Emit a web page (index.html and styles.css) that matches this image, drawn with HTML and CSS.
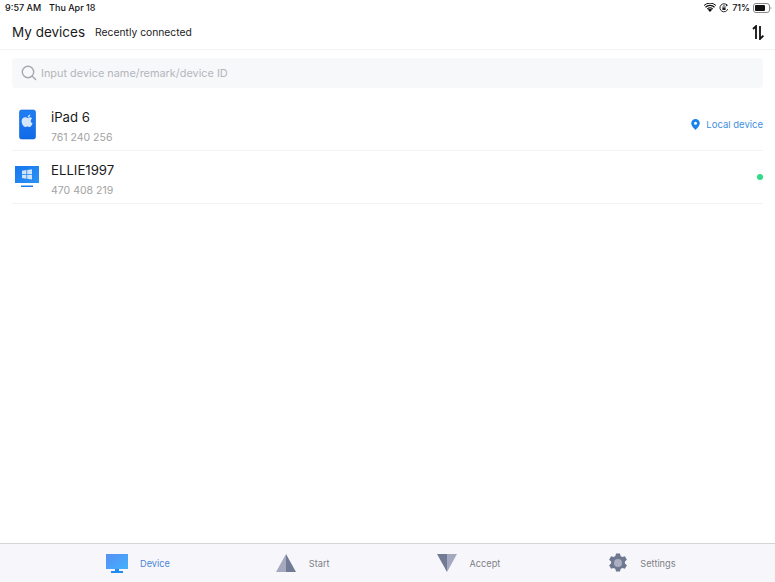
FILE: index.html
```html
<!DOCTYPE html>
<html lang="en">
<head>
<meta charset="utf-8">
<title>My devices</title>
<link rel="stylesheet" href="styles.css">
</head>
<body>
<div class="app">
  <div class="status">
    <div class="status-left"><span>9:57 AM</span><span>Thu Apr 18</span></div>
    <div class="status-right">
      <svg class="wifi" width="12" height="9" viewBox="0 0 12 9"><path d="M6 9 3.900 6.700a3 3 0 0 1 4.200 0Z" fill="#111"/><path d="M2.900 5.600a4.500 4.500 0 0 1 6.200 0L8.300 6.400a3.400 3.400 0 0 0-4.600 0Z" fill="#111"/><path d="M1 3.800a7.200 7.200 0 0 1 10 0l-.9.900a5.900 5.900 0 0 0-8.200 0Z" fill="#111"/><path d="M0 2.500a8.700 8.700 0 0 1 12 0" fill="none" stroke="#111" stroke-width="1"/></svg>
      <svg class="lock" width="10" height="10" viewBox="0 0 10 10"><path d="M8.700 6.200A4 4 0 1 1 8 2.200" fill="none" stroke="#222" stroke-width="1"/><path d="M7 .8 9 2.300 6.900 3.400Z" fill="#222"/><rect x="3.400" y="4.400" width="3.200" height="2.600" fill="#222"/><path d="M4 4.400V3.600a1 1 0 0 1 2 0v.8" fill="none" stroke="#222" stroke-width=".7"/></svg>
      <span>71%</span>
      <svg class="battery" width="19" height="10" viewBox="0 0 19 10"><rect x=".5" y=".5" width="16" height="9" rx="2.500" fill="none" stroke="#888"/><rect x="2" y="2" width="10" height="6" rx="1" fill="#111"/><path d="M17.600 3.400a2 2 0 0 1 0 3.200Z" fill="#888"/></svg>
    </div>
  </div>
  <header class="header">
    <div class="title-group">
      <h1 class="title">My devices</h1>
      <span class="subtitle">Recently connected</span>
    </div>
    <svg class="sort" width="14" height="15" viewBox="0 0 14 15"><path d="M2 4 5 1.200V14" fill="none" stroke="#111" stroke-width="1.800"/><path d="M9 1v13l3.400-3.400" fill="none" stroke="#111" stroke-width="1.800"/></svg>
  </header>
  <div class="search-wrap">
    <div class="search">
      <svg width="16" height="16" viewBox="0 0 16 16"><circle cx="7" cy="7" r="5.700" fill="none" stroke="#a5a8ac" stroke-width="1.400"/><path d="m11 11 3.600 3.600" stroke="#a5a8ac" stroke-width="1.400" stroke-linecap="round"/></svg>
      <span class="placeholder">Input device name/remark/device ID</span>
    </div>
  </div>
  <main class="list">
    <div class="row">
      <svg class="dev-icon" width="30" height="32" viewBox="0 0 30 32">
        <defs><linearGradient id="phone" x1="0" y1="0" x2="0" y2="1"><stop offset="0" stop-color="#1e7ff5"/><stop offset="1" stop-color="#0f6ae6"/></linearGradient></defs>
        <rect x="7.500" y="2" width="16" height="29" rx="2" fill="url(#phone)" stroke="#0d5fd0" stroke-width=".6"/>
        <g transform="translate(-3 -3.200) scale(1.250)">
          <path d="M15.200 10.500c.9-.7 2.400-.8 3.300.4-1.600 1-1.300 3.200.4 3.900-.5 1.400-1.400 3-2.500 3-.7 0-1-.4-1.700-.4s-1 .4-1.700.4c-1.400 0-2.900-2.600-2.900-4.600 0-2.200 1.400-3.200 2.700-3.200.9 0 1.500.5 2.400.5Z" fill="#d4e6fb"/>
          <path d="M15 10c0-1.200.8-2.100 2-2.300 0 1.300-.8 2.200-2 2.300Z" fill="#d4e6fb"/>
        </g>
      </svg>
      <div class="dev-text">
        <div class="dev-name">iPad 6</div>
        <div class="dev-id">761 240 256</div>
      </div>
      <div class="local">
        <svg width="9" height="11" viewBox="0 0 9 11"><path d="M4.500 0A4.300 4.300 0 0 0 .2 4.300C.2 7.200 4.500 11 4.500 11s4.300-3.800 4.300-6.700A4.300 4.300 0 0 0 4.500 0Z" fill="#1a82ec"/><circle cx="4.500" cy="4.200" r="1.500" fill="#fff"/></svg>
        <span>Local device</span>
      </div>
    </div>
    <div class="row">
      <svg class="dev-icon" width="30" height="32" viewBox="0 0 30 32">
        <defs><linearGradient id="mon" x1="0" y1="0" x2="1" y2="1"><stop offset="0" stop-color="#1676ee"/><stop offset="1" stop-color="#2b93f5"/></linearGradient></defs>
        <rect x="3" y="5" width="24" height="17" fill="url(#mon)"/>
        <rect x="9" y="24.500" width="12" height="1.500" fill="#1b7cec"/>
        <path d="M10 9.800 14.400 9.100V13H10ZM15.200 9 20 8.200V13H15.200ZM10 13.800H14.400V17.700L10 17ZM15.200 13.800H20V18.600L15.200 17.800Z" fill="#cfe3fb"/>
      </svg>
      <div class="dev-text">
        <div class="dev-name">ELLIE1997</div>
        <div class="dev-id">470 408 219</div>
      </div>
      <span class="online"></span>
    </div>
  </main>
  <nav class="tabbar">
    <div class="tab tab-device">
      <svg width="22" height="19" viewBox="0 0 22 19"><defs><linearGradient id="tv" x1="0" y1="0" x2="1" y2="1"><stop offset="0" stop-color="#5a8ef5"/><stop offset="1" stop-color="#3fb2fb"/></linearGradient></defs><rect width="22" height="15" fill="url(#tv)"/><rect x="9" y="15" width="4" height="2" fill="#1e8cf0"/><rect x="5" y="17" width="12" height="2" fill="#1e8cf0"/></svg>
      <span class="tab-label active">Device</span>
    </div>
    <div class="tab tab-start">
      <svg width="20" height="18" viewBox="0 0 20 18"><path d="M10 0 0 18H10Z" fill="#a4a9c0"/><path d="M10 0 20 18H10Z" fill="#727b96"/></svg>
      <span class="tab-label">Start</span>
    </div>
    <div class="tab tab-accept">
      <svg width="20" height="18" viewBox="0 0 20 18"><path d="M0 0H10V18Z" fill="#727b96"/><path d="M20 0H10V18Z" fill="#a4a9c0"/></svg>
      <span class="tab-label">Accept</span>
    </div>
    <div class="tab tab-settings">
      <svg width="20" height="20" viewBox="0 0 20 20"><path d="M8 .5h4l.6 2.600 1.700 1 2.600-.8 2 3.400-2 1.800v2l2 1.800-2 3.400-2.600-.8-1.700 1-.6 2.600H8l-.6-2.600-1.700-1-2.600.8-2-3.400 2-1.800v-2l-2-1.800 2-3.400 2.600.8 1.700-1Z" fill="#6f7891"/><circle cx="10" cy="10" r="4" fill="#aab0c2"/></svg>
      <span class="tab-label">Settings</span>
    </div>
  </nav>
</div>
</body>
</html>
```
FILE: styles.css
```css
* { box-sizing: border-box; }
html, body { margin: 0; height: 100%; }
body { font-family: "Inter", "Liberation Sans", sans-serif; background: #fff; color: #1a1a1a; overflow: hidden; }
.app { width: 775px; height: 582px; display: flex; flex-direction: column; }
.status { height: 15px; padding: 0 3px 0 5px; display: flex; justify-content: space-between; align-items: center; font-size: 9px; font-weight: 500; color: #111; }
.status-left { display: flex; gap: 8px; }
.status-right { display: flex; align-items: center; gap: 3px; }
.header { height: 35px; padding: 0 10px 0 12px; display: flex; align-items: center; justify-content: space-between; border-bottom: 1px solid #f3f3f4; }
.title-group { display: flex; align-items: center; gap: 10px; }
.title { margin: 0; font-size: 13.500px; font-weight: 400; color: #1a1a1a; }
.subtitle { font-size: 10.300px; color: #222; }
.search-wrap { padding: 8px 12px 0; }
.search { height: 30px; background: #f7f8fa; border-radius: 4px; display: flex; align-items: center; gap: 4px; padding-left: 9px; }
.placeholder { font-size: 10.900px; color: #b4b6ba; }
.list { flex: 1; padding: 10px 12px 0; }
.row { height: 53px; display: flex; align-items: center; border-bottom: 1px solid #f3f3f4; }
.dev-icon { flex: none; margin-right: 9px; }
.dev-text { flex: 1; display: flex; flex-direction: column; gap: 7px; margin-top: 5px; }
.dev-name { font-size: 13.200px; color: #1a1a1a; line-height: 16px; }
.dev-id { font-size: 10.500px; color: #a3a3a3; line-height: 12px; }
.local { display: flex; align-items: center; gap: 6px; font-size: 9.500px; color: #3f8fe0; }
.online { width: 6px; height: 6px; border-radius: 50%; background: #2fdc85; }
.tabbar { height: 39px; background: #f7f7fb; border-top: 1px solid #d4d4d6; display: flex; align-items: center; }
.tab { display: flex; align-items: center; gap: 13px; }
.tab-device { margin-left: 106px; gap: 12px; }
.tab-start { margin-left: 106px; }
.tab-accept { margin-left: 107px; }
.tab-settings { margin-left: 108px; gap: 12px; }
.tab-label { font-size: 9.200px; color: #7d7f86; }
.tab-label.active { color: #4a85d8; }
```
